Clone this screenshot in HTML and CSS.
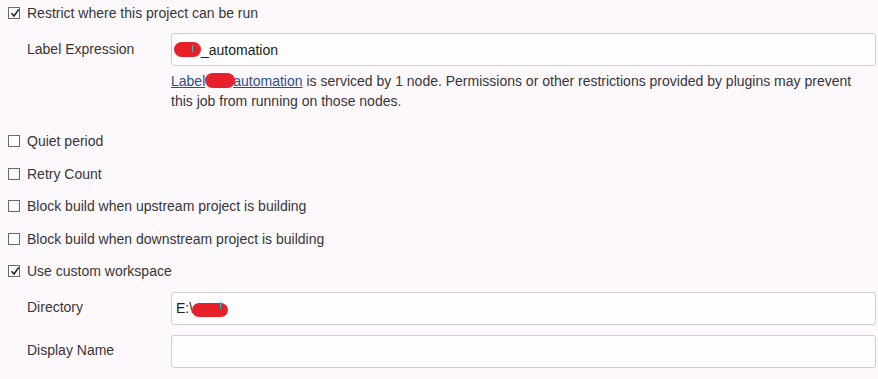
FILE: index.html
```html
<!DOCTYPE html>
<html lang="en">
<head>
    <meta charset="UTF-8">
    <title>Job configuration</title>
    <link rel="stylesheet" href="styles.css">
</head>
<body>

<div class="form">
    <div class="check first">
        <span class="box"><svg viewBox="0 0 12 12" width="12" height="12"><path d="M2.5 6.2 L5 9 L9.8 2.4" fill="none" stroke="#222" stroke-width="1.6"/></svg></span>
        Restrict where this project can be run
    </div>

    <div class="field label-expr">
        <div class="label">Label Expression</div>
        <div class="input"><span class="blot blot-in"><i class="caret"></i></span>_automation</div>
    </div>
    <div class="help">
        <a href="#" class="link">Label<span class="blot blot-link"></span>automation</a> is serviced by 1 node. Permissions or other restrictions provided by plugins may prevent<br>
        this job from running on those nodes.
    </div>

    <div class="check"><span class="box"></span>Quiet period</div>
    <div class="check"><span class="box"></span>Retry Count</div>
    <div class="check"><span class="box"></span>Block build when upstream project is building</div>
    <div class="check"><span class="box"></span>Block build when downstream project is building</div>
    <div class="check">
        <span class="box"><svg viewBox="0 0 12 12" width="12" height="12"><path d="M2.5 6.2 L5 9 L9.8 2.4" fill="none" stroke="#222" stroke-width="1.6"/></svg></span>
        Use custom workspace
    </div>

    <div class="field dir">
        <div class="label">Directory</div>
        <div class="input">E:\<span class="blot blot-dir"><i class="caret"></i></span></div>
    </div>
    <div class="field name">
        <div class="label">Display Name</div>
        <div class="input"></div>
    </div>
</div>

</body>
</html>
```

FILE: styles.css
```css
body {
    margin: 0;
    background: #fdf8fc;
    font-family: 'Liberation Sans', Arial, sans-serif;
    font-size: 14px;
    color: #363636;
}

.form {
    display: flex;
    flex-direction: column;
    padding: 0 2px 0 8px;
}

.check {
    display: flex;
    align-items: center;
    gap: 7px;
    height: 32.5px;
}

.check.first {
    height: 26px;
}

.box {
    width: 10px;
    height: 10px;
    border: 1px solid #6a6a6a;
    background: #fff;
    position: relative;
    flex: none;
}

.box svg {
    position: absolute;
    left: 0;
    top: -1px;
}

.field {
    display: grid;
    grid-template-columns: 163px 1fr;
    align-items: start;
}

.field .label {
    padding: 7px 0 0 19px;
}

.label-expr {
    margin-top: 7px;
}

.label-expr .label {
    padding-top: 8px;
}

.input {
    height: 31px;
    border: 1px solid #d0d0d0;
    border-radius: 3px;
    background: #fefefe;
    display: flex;
    align-items: center;
    padding-left: 4px;
    color: #222;
}

.help {
    margin: 5px 0 14px 163px;
    line-height: 20px;
}

.link {
    color: #2a4f8c;
    text-decoration: underline;
}

.blot {
    display: inline-block;
    background: #e8202a;
    border-radius: 8px;
    position: relative;
    vertical-align: middle;
}

.blot-in {
    width: 27px;
    height: 15px;
    margin-left: -2px;
}

.blot-link {
    width: 30px;
    height: 15px;
    margin: -4px -2px 0 0;
}

.blot-dir {
    width: 36px;
    height: 14px;
    margin: 3px 0 0 -1px;
    border-radius: 7px;
}

.caret {
    position: absolute;
    right: 8px;
    top: 3px;
    width: 1px;
    height: 7px;
    background: #1cc7c7;
}

.blot-dir .caret {
    right: 7px;
    top: -1px;
}

.dir {
    margin-top: 4px;
}

.name {
    margin-top: 10px;
}
```
